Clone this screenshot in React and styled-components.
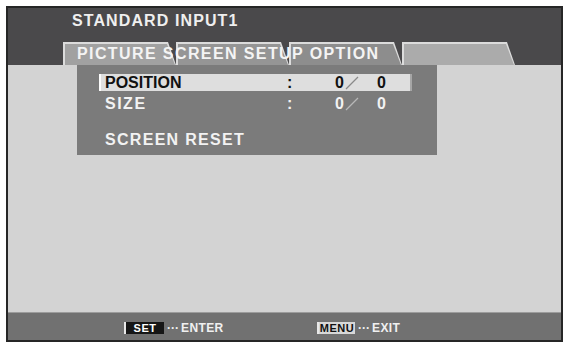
import styled, { createGlobalStyle } from 'styled-components'

const GlobalStyle = createGlobalStyle`
  html, body {
    margin: 0;
    padding: 0;
    background: #ffffff;
  }
  body {
    font-family: 'Liberation Sans', Arial, sans-serif;
    font-weight: bold;
  }
`

const Screen = styled.div`
  box-sizing: border-box;
  margin: 6px 0 0 6px;
  width: 557px;
  height: 336px;
  border: 2px solid #262626;
  display: flex;
  flex-direction: column;
  overflow: hidden;
`

const Header = styled.div`
  height: 57px;
  background: #4a494b;
  display: flex;
  flex-direction: column;
`

const Title = styled.div`
  margin: 4px 0 0 64px;
  height: 18px;
  line-height: 18px;
  font-size: 16px;
  letter-spacing: 1.1px;
  color: #efefef;
`

const TabRow = styled.div`
  position: relative;
  margin: 12px 0 0 55px;
  height: 23px;
  display: flex;
`

const Tab = styled.div`
  width: 113px;
  height: 23px;
  background: #dcdcdc;
  clip-path: polygon(0 0, calc(100% - 8px) 0, 100% 100%, 0 100%);
  display: flex;
  align-items: flex-end;
  justify-content: flex-start;
`

const TabFill = styled.div`
  width: 110px;
  height: 21px;
  background: ${({ $fill }) => $fill};
  clip-path: polygon(0 0, calc(100% - 8px) 0, 100% 100%, 0 100%);
  margin-left: 2px;
`

const TabLabel = styled.div`
  position: absolute;
  left: 14px;
  top: 0;
  line-height: 23px;
  font-size: 16px;
  letter-spacing: 1.4px;
  color: #f4f4f4;
  white-space: nowrap;
`

const Body = styled.div`
  flex: 1;
  background: #d3d3d3;
`

const Panel = styled.div`
  margin-left: 69px;
  width: 360px;
  height: 90px;
  background: #7b7b7b;
  box-sizing: border-box;
  padding: 9px 0 0 22px;
  display: flex;
  flex-direction: column;
  gap: 4px;
`

const Row = styled.div`
  box-sizing: border-box;
  width: 313px;
  height: 17px;
  padding-left: ${({ $active }) => ($active ? '4px' : '6px')};
  display: flex;
  align-items: center;
  font-size: 16px;
  color: ${({ $active }) => ($active ? '#111111' : '#f2f2f2')};
  background: ${({ $active }) => ($active ? '#dedede' : 'transparent')};
  border-left: ${({ $active }) => ($active ? '2px solid #fbfbfb' : 'none')};
  border-right: ${({ $active }) => ($active ? '2px solid #a6a6a6' : 'none')};
  margin-top: ${({ $gap }) => $gap || 0}px;
`

const Label = styled.span`
  width: 182px;
  letter-spacing: ${({ $spacing }) => $spacing}px;
  white-space: nowrap;
`

const Colon = styled.span`
  width: 48px;
`

const Num = styled.span`
  width: 10px;
`

const Slash = styled.svg`
  width: 14px;
  height: 15px;
  margin: 0 18px 0 0;
`

const Footer = styled.div`
  height: 28px;
  box-sizing: border-box;
  background: #717171;
  border-top: 1px solid #9c9c9c;
  padding: 3px 0 0 116px;
  display: flex;
  align-items: center;
  font-size: 12px;
  color: #f0f0f0;
`

const Hint = styled.div`
  display: flex;
  align-items: center;
  width: ${({ $width }) => $width}px;
`

const Key = styled.span`
  box-sizing: border-box;
  width: ${({ $width }) => $width}px;
  height: 12px;
  line-height: 12px;
  font-size: 11px;
  text-align: center;
  letter-spacing: 0.5px;
  background: ${({ $light }) => ($light ? '#d8d8d8' : '#161616')};
  color: ${({ $light }) => ($light ? '#111111' : '#ffffff')};
  border-left: 2px solid #e8e8e8;
`

const Dots = styled.span`
  margin: 0 2px 0 3px;
  letter-spacing: 0;
`

const HintText = styled.span`
  letter-spacing: 0.4px;
`

const SlashMark = ({ color }) => (
  <Slash viewBox="0 0 14 15">
    <line x1="1" y1="14" x2="13" y2="2" stroke={color} strokeWidth="1.3" />
  </Slash>
)

const App = () => (
  <>
    <GlobalStyle />
    <Screen>
      <Header>
        <Title>STANDARD INPUT1</Title>
        <TabRow>
          <Tab><TabFill $fill="#a1a1a1" /></Tab>
          <Tab><TabFill $fill="#959595" /></Tab>
          <Tab><TabFill $fill="#8d8d8d" /></Tab>
          <Tab><TabFill $fill="#ababab" /></Tab>
          <TabLabel>PICTURE SCREEN SETUP OPTION</TabLabel>
        </TabRow>
      </Header>
      <Body>
        <Panel>
          <Row $active>
            <Label $spacing={0}>POSITION</Label>
            <Colon>:</Colon>
            <Num>0</Num>
            <SlashMark color="#8a8a8a" />
            <Num>0</Num>
          </Row>
          <Row>
            <Label $spacing={1.5}>SIZE</Label>
            <Colon>:</Colon>
            <Num>0</Num>
            <SlashMark color="#b8b8b8" />
            <Num>0</Num>
          </Row>
          <Row $gap={15}>
            <Label $spacing={1.3}>SCREEN RESET</Label>
          </Row>
        </Panel>
      </Body>
      <Footer>
        <Hint $width={193}>
          <Key $width={40}>SET</Key>
          <Dots>···</Dots>
          <HintText>ENTER</HintText>
        </Hint>
        <Hint>
          <Key $width={38} $light>MENU</Key>
          <Dots>···</Dots>
          <HintText>EXIT</HintText>
        </Hint>
      </Footer>
    </Screen>
  </>
)

export default App
